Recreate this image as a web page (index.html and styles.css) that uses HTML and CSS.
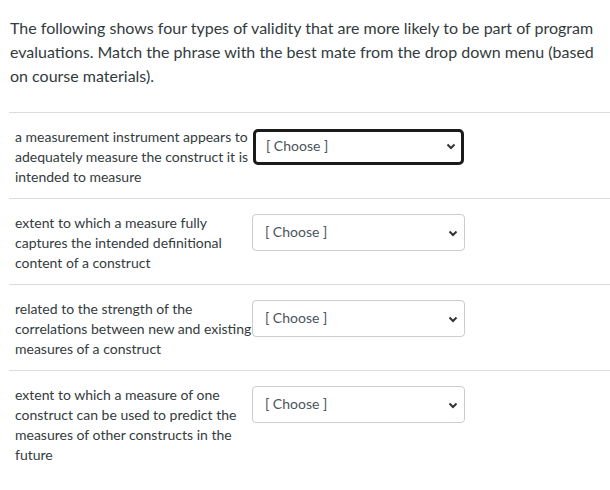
FILE: index.html
```html
<!DOCTYPE html>
<html>
<head>
<meta charset="utf-8">
<link rel="stylesheet" href="styles.css">
</head>
<body>
<div class="quiz">
  <p class="intro">The following shows four types of validity that are more likely to be part of program evaluations. Match the phrase with the best mate from the drop down menu (based on course materials).</p>
  <div class="rows">
    <div class="row">
      <div class="phrase">a measurement instrument appears to adequately measure the construct it is intended to measure</div>
      <div class="pick focused">
        <select><option>[ Choose ]</option></select>
        <svg class="chev" width="10" height="7" viewBox="0 0 10 7"><path d="M1.5 1.5 L5 5 L8.5 1.5" fill="none" stroke="#333" stroke-width="2"/></svg>
      </div>
    </div>
    <div class="row">
      <div class="phrase">extent to which a measure fully captures the intended definitional content of a construct</div>
      <div class="pick">
        <select><option>[ Choose ]</option></select>
        <svg class="chev" width="10" height="7" viewBox="0 0 10 7"><path d="M1.5 1.5 L5 5 L8.5 1.5" fill="none" stroke="#333" stroke-width="2"/></svg>
      </div>
    </div>
    <div class="row">
      <div class="phrase">related to the strength of the correlations between new and existing measures of a construct</div>
      <div class="pick">
        <select><option>[ Choose ]</option></select>
        <svg class="chev" width="10" height="7" viewBox="0 0 10 7"><path d="M1.5 1.5 L5 5 L8.5 1.5" fill="none" stroke="#333" stroke-width="2"/></svg>
      </div>
    </div>
    <div class="row last">
      <div class="phrase">extent to which a measure of one construct can be used to predict the measures of other constructs in the future</div>
      <div class="pick">
        <select><option>[ Choose ]</option></select>
        <svg class="chev" width="10" height="7" viewBox="0 0 10 7"><path d="M1.5 1.5 L5 5 L8.5 1.5" fill="none" stroke="#333" stroke-width="2"/></svg>
      </div>
    </div>
  </div>
</div>
</body>
</html>
```

FILE: styles.css
```css
html, body {
  margin: 0;
  padding: 0;
  background: #ffffff;
}
body {
  font-family: Lato, "Liberation Sans", sans-serif;
  color: #333b40;
}
.quiz {
  padding: 16px 0 0 9px;
}
.intro {
  margin: 0 0 24px 1px;
  font-size: 16px;
  line-height: 24px;
  padding-right: 10px;
}
.rows {
  border-top: 1px solid #dadddf;
}
.row {
  display: flex;
  align-items: flex-start;
  height: 85px;
  border-bottom: 1px solid #dadddf;
  padding-left: 6px;
}
.row.last {
  height: auto;
  border-bottom: none;
  padding-bottom: 20px;
}
.phrase {
  width: 237px;
  font-size: 14px;
  line-height: 20px;
  padding-top: 14px;
}
.pick {
  position: relative;
  margin-top: 15px;
  width: 213px;
  height: 37px;
}
.pick select {
  appearance: none;
  -webkit-appearance: none;
  width: 100%;
  height: 100%;
  box-sizing: border-box;
  border: 1px solid #c7cdd1;
  border-radius: 4px;
  background: #ffffff;
  font-family: Lato, "Liberation Sans", sans-serif;
  font-size: 14px;
  color: #4a545b;
  padding: 0 0 3px 12px;
  margin: 0;
  outline: none;
}
.pick.focused select {
  border: 3px solid #1b1b1b;
  padding-left: 10px;
  width: 211px;
  height: 36px;
  margin: 1px 0 0 1px;
  border-radius: 5px;
}
.chev {
  position: absolute;
  right: 7px;
  top: 16px;
}
.pick.focused .chev {
  right: 9px;
  top: 15px;
}
```
